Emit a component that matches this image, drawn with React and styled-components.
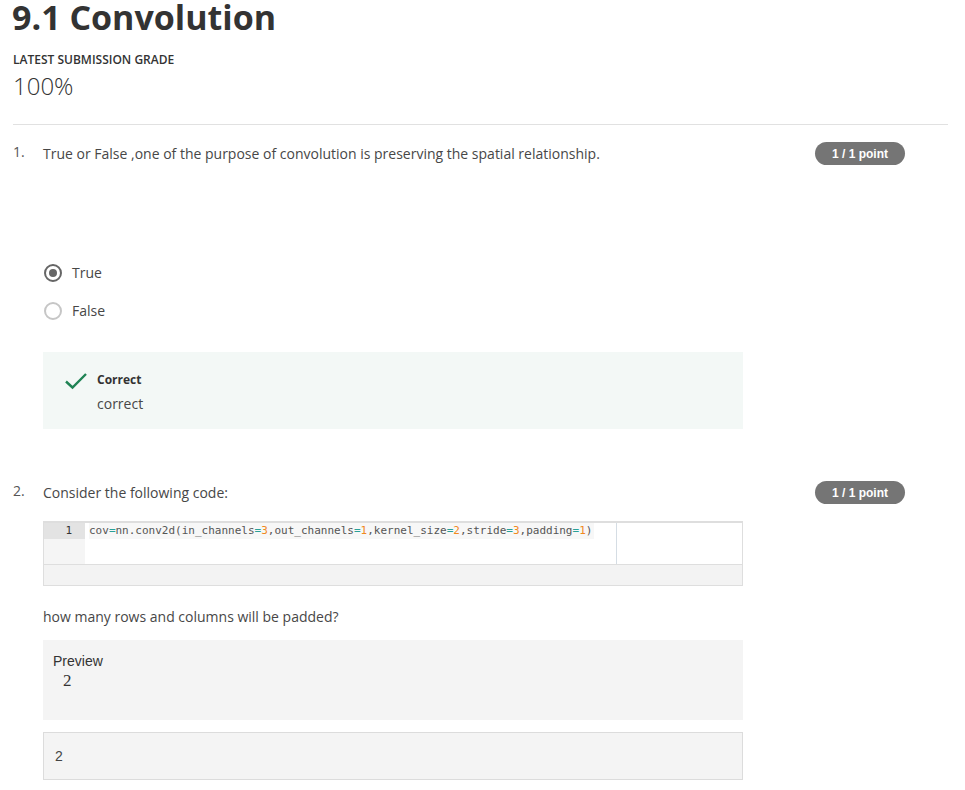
import React from 'react';
import styled, { createGlobalStyle } from 'styled-components';

const Global = createGlobalStyle`
  body {
    margin: 0;
    background: #fff;
    font-family: 'Open Sans', sans-serif;
    color: #1f1f1f;
  }
`;

const Page = styled.div`
  padding: 0 17px 0 13px;
`;

const Title = styled.h1`
  font-size: 34px;
  font-weight: 700;
  color: #333;
  margin: 0 0 0 -1px;
  line-height: 34px;
`;

const GradeLabel = styled.div`
  margin-top: 18px;
  font-size: 12px;
  font-weight: 600;
  color: #333;
  line-height: 16px;
`;

const Grade = styled.div`
  margin-top: 3px;
  font-size: 24px;
  font-weight: 300;
  color: #333;
  line-height: 30px;
`;

const Rule = styled.hr`
  border: 0;
  border-top: 1px solid #e1e1e1;
  margin: 23px 0 0;
`;

const Question = styled.div`
  display: flex;
  padding-top: ${p => p.top}px;
`;

const Num = styled.div`
  width: 30px;
  font-size: 14px;
  color: #555;
  line-height: 20px;
`;

const Body = styled.div`
  flex: 1;
`;

const Head = styled.div`
  display: flex;
  justify-content: space-between;
  align-items: center;
  font-size: 14px;
  color: #474747;
  line-height: 20px;
`;

const Badge = styled.span`
  background: #757575;
  color: #fff;
  font-family: 'Liberation Sans', Arial, sans-serif;
  font-weight: 700;
  font-size: 12px;
  border-radius: 12px;
  width: 90px;
  height: 23px;
  display: flex;
  align-items: center;
  justify-content: center;
  margin-right: 43px;
`;

const Content = styled.div`
  width: 700px;
`;

const Options = styled.div`
  display: flex;
  flex-direction: column;
  gap: 18px;
  margin-top: 98px;
`;

const Option = styled.label`
  display: flex;
  align-items: center;
  gap: 10px;
  font-size: 14px;
  color: #474747;
  line-height: 20px;
  margin-left: 1px;
`;

const Radio = styled.span`
  width: 18px;
  height: 18px;
  box-sizing: border-box;
  border-radius: 50%;
  border: 2px solid ${p => (p.checked ? '#666' : '#c6c6c6')};
  display: flex;
  align-items: center;
  justify-content: center;
  &::after {
    content: '';
    display: ${p => (p.checked ? 'block' : 'none')};
    width: 8px;
    height: 8px;
    border-radius: 50%;
    background: #666;
  }
`;

const Feedback = styled.div`
  margin-top: 31px;
  background: #f3f8f6;
  height: 77px;
  display: flex;
  padding: 18px 0 0 21px;
  box-sizing: border-box;
  gap: 9px;
`;

const FeedbackText = styled.div`
  display: flex;
  flex-direction: column;
`;

const FeedbackTitle = styled.div`
  font-size: 12px;
  font-weight: 700;
  color: #333;
  line-height: 20px;
`;

const FeedbackBody = styled.div`
  font-size: 14px;
  color: #474747;
  line-height: 20px;
  margin-top: 4px;
`;

const Editor = styled.div`
  margin-top: 17px;
  border: 1px solid #dedede;
  border-top-width: 2px;
  height: 65px;
  box-sizing: border-box;
  display: flex;
  flex-direction: column;
`;

const EditorMain = styled.div`
  display: flex;
  height: 41px;
  background: #fff;
  border-bottom: 1px solid #dedede;
  position: relative;
`;

const Gutter = styled.div`
  width: 41px;
  background: #f5f5f5;
`;

const GutterLine = styled.div`
  background: #e3e3e3;
  height: 16px;
  font-family: 'DejaVu Sans Mono', monospace;
  font-size: 11px;
  color: #333;
  text-align: right;
  padding-right: 13px;
  line-height: 16px;
`;

const Code = styled.div`
  flex: 1;
  font-family: 'DejaVu Sans Mono', monospace;
  font-size: 11px;
  line-height: 16px;
  color: #555;
  padding-left: 4px;
`;

const CodeLine = styled.span`
  display: inline-block;
  background: #f7f7f7;
  padding-right: 2px;
`;

const Num2 = styled.span`
  color: #f0891e;
`;

const Op = styled.span`
  color: #2aa198;
`;

const Margin = styled.div`
  position: absolute;
  left: 572px;
  top: 0;
  bottom: 0;
  border-left: 1px solid #d5dde4;
`;

const EditorFoot = styled.div`
  flex: 1;
  background: #f3f3f3;
`;

const Prompt = styled.div`
  margin-top: 21px;
  font-size: 14px;
  color: #474747;
  line-height: 20px;
`;

const Preview = styled.div`
  margin-top: 13px;
  background: #f4f4f4;
  height: 80px;
  padding: 12px 0 0 10px;
  box-sizing: border-box;
  font-family: 'Liberation Sans', Arial, sans-serif;
  font-size: 14px;
  line-height: 18px;
  color: #333;
`;

const MathVal = styled.div`
  font-family: 'Liberation Serif', 'Times New Roman', serif;
  font-size: 17px;
  margin-left: 10px;
  line-height: 22px;
`;

const Input = styled.div`
  margin-top: 12px;
  background: #f4f4f4;
  border: 1px solid #dcdcdc;
  height: 48px;
  box-sizing: border-box;
  display: flex;
  align-items: center;
  padding-left: 11px;
  font-family: 'Liberation Sans', Arial, sans-serif;
  font-size: 14px;
  color: #444;
`;

const Check = () => (
  <svg width="24" height="18" viewBox="0 0 24 18" style={{ marginTop: 2 }}>
    <path d="M2 9.5 L8.5 15.5 L22 2" fill="none" stroke="#1f8354" strokeWidth="2.4" />
  </svg>
);

export default function App() {
  return (
    <Page>
      <Global />
      <Title>9.1 Convolution</Title>
      <GradeLabel>LATEST SUBMISSION GRADE</GradeLabel>
      <Grade>100%</Grade>
      <Rule />

      <Question top={17}>
        <Num>1.</Num>
        <Body>
          <Head>
            <span>True or False ,one of the purpose of convolution is preserving the spatial relationship.</span>
            <Badge>1 / 1 point</Badge>
          </Head>
          <Content>
            <Options>
              <Option><Radio checked />True</Option>
              <Option><Radio />False</Option>
            </Options>
            <Feedback>
              <Check />
              <FeedbackText>
                <FeedbackTitle>Correct</FeedbackTitle>
                <FeedbackBody>correct</FeedbackBody>
              </FeedbackText>
            </Feedback>
          </Content>
        </Body>
      </Question>

      <Question top={52}>
        <Num>2.</Num>
        <Body>
          <Head>
            <span>Consider the following code:</span>
            <Badge>1 / 1 point</Badge>
          </Head>
          <Content>
            <Editor>
              <EditorMain>
                <Gutter><GutterLine>1</GutterLine></Gutter>
                <Code>
                  <CodeLine>
                    cov<Op>=</Op>nn.conv2d(in_channels<Op>=</Op><Num2>3</Num2>,out_channels<Op>=</Op><Num2>1</Num2>,kernel_size<Op>=</Op><Num2>2</Num2>,stride<Op>=</Op><Num2>3</Num2>,padding<Op>=</Op><Num2>1</Num2>)
                  </CodeLine>
                </Code>
                <Margin />
              </EditorMain>
              <EditorFoot />
            </Editor>
            <Prompt>how many rows and columns will be padded?</Prompt>
            <Preview>
              Preview
              <MathVal>2</MathVal>
            </Preview>
            <Input>2</Input>
          </Content>
        </Body>
      </Question>
    </Page>
  );
}
